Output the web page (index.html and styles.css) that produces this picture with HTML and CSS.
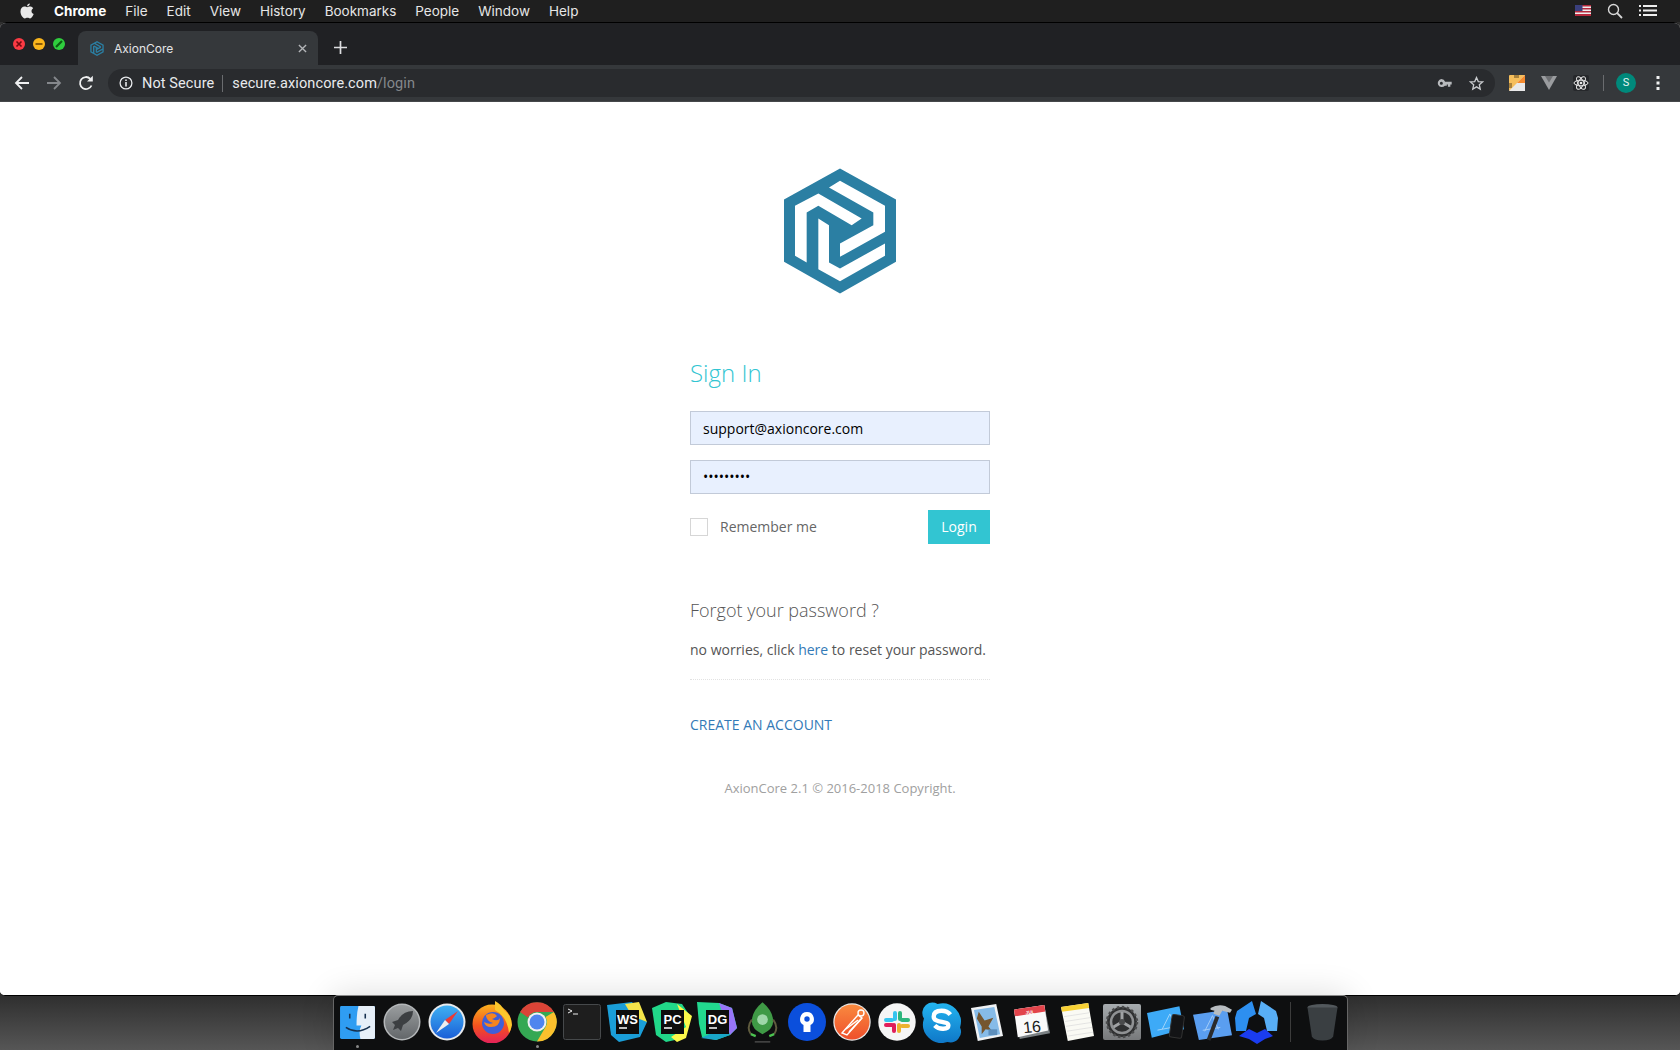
FILE: index.html
```html
<!DOCTYPE html>
<html lang="en">
<head>
<meta charset="utf-8">
<title>AxionCore</title>
<link rel="stylesheet" href="styles.css">
</head>
<body>
<svg class="defs" width="0" height="0" aria-hidden="true">
  <symbol id="axlogo" viewBox="72 40 336 375">
    <path fill-rule="evenodd" d="M240 40L408 133V320L240 415L72 320V133ZM207 97L340 172V210L240 265V305L375 230V152L240 77ZM175 115L105 152V302L140 322V172L175 152L275 210L305 190ZM175 190V342L240 378L375 302V265L240 340L207 322V210Z"/>
  </symbol>
  <linearGradient id="lp" x1="0" y1="0" x2="0" y2="1"><stop offset="0" stop-color="#9a9d9f"/><stop offset="1" stop-color="#63676a"/></linearGradient>
  <linearGradient id="fx" x1="0" y1="0" x2="0" y2="1"><stop offset="0" stop-color="#fbb21e"/><stop offset=".55" stop-color="#f4511e"/><stop offset="1" stop-color="#e3215a"/></linearGradient>
  <linearGradient id="sa" x1="0" y1="0" x2="0" y2="1"><stop offset="0" stop-color="#3fb0f2"/><stop offset="1" stop-color="#1a5fd8"/></linearGradient>
  <linearGradient id="pm" x1="0" y1="0" x2="0" y2="1"><stop offset="0" stop-color="#f98a3f"/><stop offset="1" stop-color="#ef4f2b"/></linearGradient>
  <linearGradient id="sk" x1="0" y1="0" x2="0" y2="1"><stop offset="0" stop-color="#23b4f0"/><stop offset="1" stop-color="#0f78c8"/></linearGradient>
  <linearGradient id="sy" x1="0" y1="0" x2="0" y2="1"><stop offset="0" stop-color="#a6abae"/><stop offset="1" stop-color="#77797b"/></linearGradient>
</svg>

<header class="menubar">
  <svg class="apple" viewBox="0 0 24 28" width="14" height="16"><path fill="#e8e8e8" d="M17 1c.2 2.400-2.200 5-4.800 4.800C11.900 3.300 14.500 1 17 1ZM12.300 7.400c1.300 0 2.800-1.200 5-1.200 1 0 3.800.3 5.500 2.800-4.300 2.700-3.600 8.300.9 10.200-1.300 3.500-4 7.800-6.300 7.800-1.800 0-2.400-1.200-4.600-1.200s-2.900 1.200-4.600 1.200C4.800 27 .6 20.500.6 14.800c0-5.500 3.600-8.500 6.900-8.500 2.100 0 3.700 1.100 4.800 1.100Z"/></svg>
  <nav class="menu">
    <span class="menu-app">Chrome</span><span>File</span><span>Edit</span><span>View</span><span>History</span><span>Bookmarks</span><span>People</span><span>Window</span><span>Help</span>
  </nav>
  <div class="status">
    <svg viewBox="0 0 16 11" width="16" height="11"><rect width="16" height="11" fill="#eee"/><path fill="#b5283c" d="M0 0h16v1.500H0zM0 3h16v1.500H0zM0 6h16v1.500H0zM0 9h16v2H0z"/><rect width="7.500" height="6" fill="#3a3f7c"/></svg>
    <svg viewBox="0 0 16 16" width="16" height="16"><circle cx="6.500" cy="6.500" r="5" fill="none" stroke="#d8d8d8" stroke-width="1.400"/><path d="M10.200 10.200L15 15" stroke="#d8d8d8" stroke-width="1.800"/></svg>
    <svg viewBox="0 0 18 11" width="18" height="11"><path fill="#eee" d="M0 0h2v2H0zM0 4.500h2v2H0zM0 9h2v2H0zM4 0h14v2H4zM4 4.500h14v2H4zM4 9h14v2H4z"/></svg>
  </div>
</header>

<div class="window">
  <div class="tabstrip">
    <div class="lights">
      <svg viewBox="0 0 12 12" width="12" height="12"><circle cx="6" cy="6" r="6" fill="#fb3a44"/><path d="M3.500 3.500l5 5M8.500 3.500l-5 5" stroke="#6e0a0e" stroke-width="1.600"/></svg>
      <svg viewBox="0 0 12 12" width="12" height="12"><circle cx="6" cy="6" r="6" fill="#fbb61c"/><path d="M2.500 6h7" stroke="#8a5a06" stroke-width="1.800"/></svg>
      <svg viewBox="0 0 12 12" width="12" height="12"><circle cx="6" cy="6" r="6" fill="#2fce3e"/><path d="M3 9L9 3" stroke="#0b5e12" stroke-width="2.200"/></svg>
    </div>
    <div class="tab">
      <svg class="favicon" width="14" height="15"><use href="#axlogo"/></svg>
      <span class="tab-title">AxionCore</span>
      <svg class="tab-close" viewBox="0 0 10 10" width="9" height="9"><path d="M1 1l8 8M9 1l-8 8" stroke="#b4b6b9" stroke-width="1.500"/></svg>
    </div>
    <svg class="newtab" viewBox="0 0 13 13" width="13" height="13"><path d="M6.500 0v13M0 6.500h13" stroke="#dcdde0" stroke-width="1.700"/></svg>
  </div>
  <div class="toolbar">
    <svg class="navicon" viewBox="0 0 16 16" width="16" height="16"><path d="M15 8H2M8 2L2 8l6 6" fill="none" stroke="#f0f1f2" stroke-width="1.800"/></svg>
    <svg class="navicon" viewBox="0 0 16 16" width="16" height="16"><path d="M1 8h13M8 2l6 6-6 6" fill="none" stroke="#85888c" stroke-width="1.800"/></svg>
    <svg class="navicon" viewBox="0 0 16 16" width="16" height="16"><path d="M13.500 10.500A6 6 0 1 1 12.300 3.800" fill="none" stroke="#f0f1f2" stroke-width="1.800"/><path d="M9 6.500h5.800V.8Z" fill="#f0f1f2"/></svg>
    <div class="omnibox">
      <svg class="info" viewBox="0 0 14 14" width="14" height="14"><circle cx="7" cy="7" r="5.900" fill="none" stroke="#e8eaed" stroke-width="1.300"/><path fill="#e8eaed" d="M6.200 6h1.600v4.500H6.200zM6.200 3.400h1.600V5H6.200z"/></svg>
      <span class="secure">Not Secure</span>
      <span class="url">secure.axioncore.com<span class="url-path">/login</span></span>
      <svg class="omni-key" viewBox="0 0 16 10" width="15" height="9"><path fill="#b8babd" fill-rule="evenodd" d="M4.500 0a4.500 4.500 0 0 1 4.200 3H16v3h-1.500v2.500h-2.700V6h-1.300v1.500H8.400A4.500 4.500 0 1 1 4.500 0Zm0 3a1.700 1.700 0 1 0 0 3.400 1.700 1.700 0 0 0 0-3.400Z"/></svg>
      <svg class="omni-star" viewBox="0 0 16 16" width="15" height="15"><path d="M8 1.600l1.900 4.300 4.600.4-3.500 3.100 1 4.600L8 11.600 4 14l1-4.600L1.500 6.300l4.600-.4Z" fill="none" stroke="#c8cacd" stroke-width="1.400"/></svg>
    </div>
    <div class="extensions">
      <svg viewBox="0 0 16 16" width="16" height="16"><rect width="16" height="16" rx="1" fill="#f6bf5c"/><path d="M16 0v16H0Z" fill="#e9e9e9"/><path d="M16 0v8L8 8Z" fill="#f58a2e"/><path d="M0 8h3v5H0zM5 0h5v3H5z" fill="#a9823c"/></svg>
      <svg viewBox="0 0 16 14" width="16" height="14"><path d="M0 0h16L8 14Z" fill="#9a9c9f"/><path d="M4 0h8L8 6.500Z" fill="#6d6f72"/></svg>
      <svg class="ext-atom" viewBox="0 0 16 16" width="16" height="16"><rect width="16" height="16" rx="2" fill="#26282b"/><g fill="none" stroke="#e8e8e8"><ellipse cx="8" cy="8" rx="7" ry="2.800"/><ellipse cx="8" cy="8" rx="7" ry="2.800" transform="rotate(60 8 8)"/><ellipse cx="8" cy="8" rx="7" ry="2.800" transform="rotate(120 8 8)"/></g><circle cx="8" cy="8" r="1.300" fill="#e8e8e8"/></svg>
      <span class="tool-sep"></span>
      <span class="avatar">S</span>
      <svg class="kebab" viewBox="0 0 4 14" width="4" height="14"><path fill="#f0f1f2" d="M.500 0h3v3h-3zM.500 5.500h3v3h-3zM.500 11h3v3h-3z"/></svg>
    </div>
  </div>

  <main class="page">
    <svg class="logo" width="112" height="126"><use href="#axlogo"/></svg>
    <section class="login">
      <h1 class="title">Sign In</h1>
      <div class="field">support@axioncore.com</div>
      <div class="field dots">•••••••••</div>
      <div class="actions">
        <label class="remember"><span class="check"></span><span class="remember-text">Remember me</span></label>
        <button class="btn" type="button">Login</button>
      </div>
      <h2 class="forgot">Forgot your password ?</h2>
      <p class="hint">no worries, click <a href="#">here</a> to reset your password.</p>
      <a class="create" href="#">CREATE AN ACCOUNT</a>
    </section>
    <p class="copyright">AxionCore 2.1 © 2016-2018 Copyright.</p>
  </main>
</div>

<footer class="dock">
  <div class="dock-item run"><svg viewBox="0 0 36 34" width="35" height="33"><rect width="36" height="34" rx="1.500" fill="#2f9df2"/><path d="M19 0h15.500A1.500 1.500 0 0 1 36 1.500v31a1.500 1.500 0 0 1-1.500 1.500H21q-2-9 1-14h-5Q17 8 19 0Z" fill="#e6eff8"/><path d="M10 8v5M26 8v5" stroke="#16314f" stroke-width="1.600"/><path d="M6 22q12 8 25-1" fill="none" stroke="#16314f" stroke-width="1.600"/></svg></div>
  <div class="dock-item"><svg viewBox="0 0 38 38" width="38" height="38"><circle cx="19" cy="19" r="18.500" fill="#b4b7b9"/><circle cx="19" cy="19" r="17" fill="url(#lp)"/><path d="M30 8q-10 0-15 9l-6 2 3 3-2 5 5-2 3 3 2-6q10-5 10-14Z" fill="#3c3f42"/></svg></div>
  <div class="dock-item"><svg viewBox="0 0 38 38" width="38" height="38"><circle cx="19" cy="19" r="18.500" fill="#e8eaec"/><circle cx="19" cy="19" r="16.500" fill="url(#sa)"/><path d="M30 8L21 21l-4-4Z" fill="#ec3a35"/><path d="M8 30l9-13 4 4Z" fill="#eee"/></svg></div>
  <div class="dock-item"><svg viewBox="0 0 40 42" width="40" height="42"><circle cx="20" cy="23" r="19.500" fill="url(#fx)"/><path d="M23 0q6 3 9 9 8 6 8 15-1 5-3 8-2-17-14-23Z" fill="#fcc72c"/><circle cx="21" cy="22" r="11" fill="#3f5fd8"/><path d="M14 14q8-4 11 1-3 3-5 3 6 3 8-1 0 9-9 9-6 0-7-5 5 3 9 1-7-2-7-8Z" fill="#f7851f"/></svg></div>
  <div class="dock-item run"><svg viewBox="0 0 40 40" width="40" height="40"><circle cx="20" cy="20" r="19.500" fill="#34a853"/><path d="M3.100 10A19.500 19.500 0 0 1 36.900 10H20A10 10 0 0 0 11 15.500Z" fill="#db4437"/><path d="M36.900 10A19.500 19.500 0 0 1 20 39.500L28.500 25A10 10 0 0 0 28.500 15Z" fill="#fbc02d"/><circle cx="20" cy="20" r="9.500" fill="#f1f1f1"/><circle cx="20" cy="20" r="7.500" fill="#4f85ee"/></svg></div>
  <div class="dock-item"><svg viewBox="0 0 38 36" width="38" height="36"><rect x=".5" y=".5" width="37" height="35" rx="2" fill="#1e1e1e" stroke="#46494b"/><path d="M5 5l4 2-4 2" fill="none" stroke="#eee"/><path d="M10 10h5" stroke="#eee"/></svg></div>
  <div class="dock-item"><svg viewBox="0 0 40 40" width="40" height="40"><path d="M0 3L25 0l15 20-7 15-21 5L4 33Z" fill="#1a9ed8"/><path d="M18 2l14-2 8 20-15-6Z" fill="#f3e44a"/><rect x="9" y="8" width="23" height="24" fill="#0d0d0d"/><path d="M12 26h8" stroke="#fff" stroke-width="1.500"/><text class="ide-text" x="20.500" y="22" text-anchor="middle">WS</text></svg></div>
  <div class="dock-item"><svg viewBox="0 0 40 40" width="40" height="40"><path d="M0 6L14 0l16 2 8 12-6 22-18 4L4 33Z" fill="#21d789"/><path d="M25 2l15 12-6 22-9 4-6-5 15-10Z" fill="#fcf84a"/><rect x="9" y="8" width="23" height="24" fill="#0d0d0d"/><path d="M12 26h8" stroke="#fff" stroke-width="1.500"/><text class="ide-text" x="20.500" y="22" text-anchor="middle">PC</text></svg></div>
  <div class="dock-item"><svg viewBox="0 0 40 40" width="40" height="40"><path d="M0 0l22 1 13 5 5 20-7 7-14 5-14-3-3-13Z" fill="#22d88f"/><path d="M22 1l13 5 5 20-7 7Z" fill="#9775f8"/><path d="M4 36l15 2 14-5-5-8Z" fill="#19a6c8"/><rect x="9" y="8" width="23" height="24" fill="#0d0d0d"/><path d="M12 26h8" stroke="#fff" stroke-width="1.500"/><text class="ide-text" x="20.500" y="22" text-anchor="middle">DG</text></svg></div>
  <div class="dock-item"><svg viewBox="0 0 32 42" width="31" height="41"><path d="M16 0q-11 9-11 20 0 8 11 13 11-5 11-13Q27 9 16 0Z" fill="#3f9a46"/><circle cx="16" cy="18" r="5.500" fill="#9fd7a9"/><path d="M5 18q-6 8-1 15M27 18q6 8 1 15" fill="none" stroke="#5f5b3e" stroke-width="2"/><path d="M4 33l5 2M28 33l-5 2" stroke="#4cc350" stroke-width="2.400"/><path d="M8 41h16" stroke="#4a4a4a" stroke-width="1.500"/></svg></div>
  <div class="dock-item"><svg viewBox="0 0 38 38" width="38" height="38"><circle cx="19" cy="19" r="19" fill="#0b4fdc"/><path d="M19 9a7 7 0 0 0-3.500 13V29h7v-7A7 7 0 0 0 19 9Z" fill="#fff"/><circle cx="19" cy="16" r="2.700" fill="#0b4fdc"/></svg></div>
  <div class="dock-item"><svg viewBox="0 0 38 38" width="38" height="38"><circle cx="19" cy="19" r="18.700" fill="#e8e8e8"/><circle cx="19" cy="19" r="17.500" fill="url(#pm)"/><g fill="none" stroke="#fff" stroke-width="1.400"><path d="M9 30L25 12l4 3-15 17Z"/><path d="M13 26l12-9M16 29l12-13"/><circle cx="28" cy="10" r="3"/></g></svg></div>
  <div class="dock-item"><svg viewBox="0 0 38 38" width="38" height="38"><circle cx="19" cy="19" r="18.700" fill="#f5f5f5"/><g stroke-width="4" stroke-linecap="round" fill="none"><path d="M17 10v6M8 17h6" stroke="#36c5f0"/><path d="M22 10v6" stroke="#2eb67d"/><path d="M24 17h6" stroke="#2eb67d"/><path d="M21 28v-6" stroke="#ecb22e"/><path d="M24 23h6" stroke="#ecb22e"/><path d="M16 28v-6" stroke="#e01e5a"/><path d="M8 22h6" stroke="#e01e5a"/></g></svg></div>
  <div class="dock-item"><svg viewBox="0 0 42 42" width="41" height="41"><path d="M4 3A11 11 0 0 1 16 2a19 19 0 0 1 23 24 11 11 0 0 1-13 15A19 19 0 0 1 2 17 11 11 0 0 1 4 3Z" fill="url(#sk)"/><path d="M29 13q-3-4-9-4-8 0-8 6c0 7 15 4 15 9 0 4-9 5-14 0M21 9" fill="none" stroke="#fff" stroke-width="4.500"/></svg></div>
  <div class="dock-item"><svg viewBox="0 0 34 38" width="33" height="37"><path d="M0 4L26 0l7 33-26 5Z" fill="#f0f2f4"/><path d="M3 6l21-3 6 28-21 4Z" fill="#86bbe8"/><path d="M8 8l6 9 9-3-5 9 3 4-6-1-4 5 0-8-5-8Z" fill="#75562f"/><path d="M18 26h9v6h-9z" fill="#5d8fbd"/></svg></div>
  <div class="dock-item"><svg viewBox="0 0 38 38" width="36" height="36"><path d="M0 6L32 1l6 30-32 6Z" fill="#7b8184"/><path d="M0 6l32-5 4 27-32 7Z" fill="#fafafa"/><path d="M0 6l32-5 1 7L1 13Z" fill="#e2444b"/><text class="cal-month" x="17" y="10.500" text-anchor="middle" transform="rotate(-6 17 9)">JUL</text><text class="cal-day" x="19" y="30" text-anchor="middle" transform="rotate(-6 19 24)">16</text></svg></div>
  <div class="dock-item"><svg viewBox="0 0 34 39" width="33" height="38"><path d="M0 4L28 0l6 34-27 5Z" fill="#fafaf4"/><path d="M0 4L28 0l1 5L1 9Z" fill="#f8d135"/><path d="M3 14l26-4M4 19l26-4M5 24l26-4M6 29l26-4M7 34l26-4" stroke="#ddd" stroke-width=".8"/></svg></div>
  <div class="dock-item"><svg viewBox="0 0 38 36" width="38" height="36"><rect width="38" height="36" rx="2" fill="url(#sy)"/><circle cx="19" cy="18" r="15" fill="#2f3031"/><circle cx="19" cy="18" r="15" fill="none" stroke="#4a4b4c" stroke-width="2.500" stroke-dasharray="2.500 2.500"/><circle cx="19" cy="18" r="11" fill="none" stroke="#8f9193" stroke-width="2.500"/><path d="M19 18V8M19 18l-8.500 5M19 18l8.500 5" stroke="#a0a2a4" stroke-width="3"/><circle cx="19" cy="18" r="3" fill="#4a4b4c"/></svg></div>
  <div class="dock-item"><svg viewBox="0 0 42 34" width="40" height="33"><path d="M0 7L34 0l5 24L5 33Z" fill="#3daaf7"/><path d="M16 24l8-16M11 25l16-3M24 8l6 14" stroke="#a4d6fa" fill="none"/><rect x="25" y="9" width="13" height="24" rx="2" transform="rotate(8 31 20)" fill="#131416" stroke="#333"/></svg></div>
  <div class="dock-item"><svg viewBox="0 0 42 38" width="41" height="37"><path d="M1 11L36 6l5 26L7 37Z" fill="#5a9ef0"/><path d="M13 28l8-16M11 27l18-3M21 12l6 14" stroke="#a4cdf8" fill="none"/><path d="M17 37l9-24" stroke="#2b2b2c" stroke-width="4"/><path d="M19 4Q26 0 34 2l7 4-2 3-8-2-3 5-6-2 1-3-4-1Z" fill="#b7bcc0"/></svg></div>
  <div class="dock-item"><svg viewBox="0 0 44 43" width="44" height="43"><path d="M17 0L2 10 0 17l1 13h10l3-13 7-4Z" fill="#2d8ff0"/><path d="M26 0L41 10l2 7-1 13H32l-3-13-6-4Z" fill="#58aef5"/><path d="M4 35l10-7 8 4 8-4 8 7-8 3-8 5-8-5Z" fill="#1a3cf0"/></svg></div>
  <span class="dock-sep"></span>
  <div class="dock-item"><svg viewBox="0 0 32 38" width="31" height="38"><ellipse cx="16" cy="4" rx="15.500" ry="3.500" fill="#52585c"/><path d="M.5 4h31L27 34q-2 4-11 4T5 34Z" fill="#3a3f42"/></svg></div>
</footer>
</body>
</html>
```

FILE: styles.css
```css
* { box-sizing: border-box; }
html, body { margin: 0; height: 100%; }
body {
  width: 1680px;
  height: 1050px;
  overflow: hidden;
  display: flex;
  flex-direction: column;
  font-family: "Open Sans", sans-serif;
  background: linear-gradient(#2f2f2f 996px, #565656 1050px);
}
.defs { position: absolute; }

/* macOS menu bar */
.menubar {
  height: 22px;
  flex: none;
  display: flex;
  align-items: center;
  padding: 0 23px 1px 20px;
  background: #1f1f1f;
  color: #e6e6e6;
  font: 13.5px Inter, sans-serif;
}
.apple { margin-right: 20px; }
.menu { display: flex; gap: 19px; }
.menu-app { font-weight: 700; color: #fff; }
.status { margin-left: auto; display: flex; align-items: center; gap: 16px; }

/* browser window */
.window {
  flex: 1;
  display: flex;
  flex-direction: column;
  border-top: 1px solid #000;
  border-bottom: 1px solid #000;
  border-radius: 6px 6px 5px 5px;
  overflow: hidden;
  background: #fff;
}
.tabstrip {
  height: 42px;
  flex: none;
  display: flex;
  align-items: flex-end;
  background: #202124;
  padding-left: 13px;
}
.lights { display: flex; gap: 8px; width: 65px; padding-bottom: 15px; }
.tab {
  width: 240px;
  height: 34px;
  display: flex;
  align-items: center;
  padding: 0 11px 0 12px;
  background: #35383b;
  border-radius: 8px 8px 0 0;
  color: #e4e5e7;
}
.favicon { fill: #2b7fa3; margin-right: 10px; }
.tab-title { font: 12px Inter, sans-serif; flex: 1; }
.newtab { margin: 0 0 11px 16px; }
.toolbar {
  height: 37px;
  flex: none;
  display: flex;
  align-items: center;
  gap: 16px;
  padding: 0 20px 0 14px;
  background: #35383b;
  border-bottom: 1px solid #45484b;
}
.omnibox {
  width: 1387px;
  height: 28px;
  margin-left: -2px;
  display: flex;
  align-items: center;
  padding: 0 10px 0 11px;
  background: #292b2e;
  border-radius: 14px;
  font: 14.5px Roboto, sans-serif;
  letter-spacing: 0.1px;
  color: #e8eaed;
}
.info { margin-right: 9px; }
.secure { padding-right: 8px; border-right: 1px solid #6a6c6f; margin-right: 9px; line-height: 17px; }
.url-path { color: #85888c; }
.omni-key { margin-left: auto; }
.omni-star { margin-left: 17px; margin-right: 1px; }
.extensions { display: flex; align-items: center; margin-left: -2px; gap: 16px; flex: 1; }
.tool-sep { width: 1px; height: 16px; background: #6a6c6f; margin-left: -2px; }
.avatar {
  width: 20px;
  height: 20px;
  margin-left: -4px;
  border-radius: 50%;
  background: #00897b;
  color: #e8f5f3;
  font: 11px/20px Roboto, sans-serif;
  text-align: center;
}
.kebab { margin-left: 4px; }
.ide-text { font: 700 13px "Liberation Sans", sans-serif; fill: #fff; }
.cal-month { font: 700 5px "Liberation Sans", sans-serif; fill: #fff; }
.cal-day { font: 17px "Liberation Sans", sans-serif; fill: #222; }

/* login page */
.page {
  flex: 1;
  display: flex;
  flex-direction: column;
  align-items: center;
  padding-top: 66px;
  background: #fff;
}
.logo { fill: #2b7fa3; flex: none; }
.login { width: 300px; margin-top: 58px; }
.title {
  margin: 0 0 18px;
  font-size: 24px;
  line-height: 41px;
  font-weight: 300;
  color: #32c5d2;
}
.field {
  height: 34px;
  margin-bottom: 15px;
  padding: 1px 12px 0;
  background: #e8f0fe;
  border: 1px solid #c2cad8;
  font-size: 14px;
  line-height: 32px;
  color: #000;
}
.dots { font-size: 14px; letter-spacing: 0; padding-top: 0; }
.actions { display: flex; align-items: center; justify-content: space-between; margin-top: 16px; }
.remember { display: flex; align-items: center; gap: 12px; font-size: 14px; color: #666; }
.remember-text { margin-top: -2px; }
.check { width: 18px; height: 18px; border: 1px solid #d6d6d6; }
.btn {
  width: 62px;
  height: 34px;
  padding: 0 0 1px;
  border: 0;
  background: #32c5d2;
  color: #fff;
  font: 14px "Open Sans", sans-serif;
}
.forgot { margin: 54px 0 0; font-size: 18px; line-height: 24px; font-weight: 300; color: #555; }
.hint {
  margin: 18px 0 0;
  padding-bottom: 19px;
  font-size: 14px;
  line-height: 20px;
  color: #555;
  border-bottom: 1px dotted #e2e2e2;
}
.hint a, .create { color: #337ab7; text-decoration: none; }
.create { display: block; margin-top: 35px; font-size: 14px; line-height: 20px; }
.copyright { margin: 44px 0 0; font-size: 13px; line-height: 18px; color: #a0a0a0; }

/* dock */
.dock {
  position: relative;
  height: 55px;
  width: 1015px;
  flex: none;
  margin: -1px auto 0;
  padding: 5px 0 0 1px;
  display: flex;
  align-items: flex-start;
  background: #0e0f10;
  border-top: 1px solid #8a8a8a;
  border-left: 1px solid #666;
  border-right: 1px solid #666;
  border-radius: 5px 5px 0 0;
  box-shadow: 0 0 34px rgba(0, 0, 0, 0.14);
}
.dock-item {
  width: 45px;
  height: 42px;
  flex: none;
  display: flex;
  align-items: center;
  justify-content: center;
  position: relative;
}
.run::after {
  content: "";
  position: absolute;
  left: 21px;
  top: 44px;
  width: 3px;
  height: 3px;
  border-radius: 50%;
  background: #888;
}
.dock-sep { width: 1px; height: 40px; margin: 1px 9px 0 10px; background: #3c3c3c; flex: none; }
```
